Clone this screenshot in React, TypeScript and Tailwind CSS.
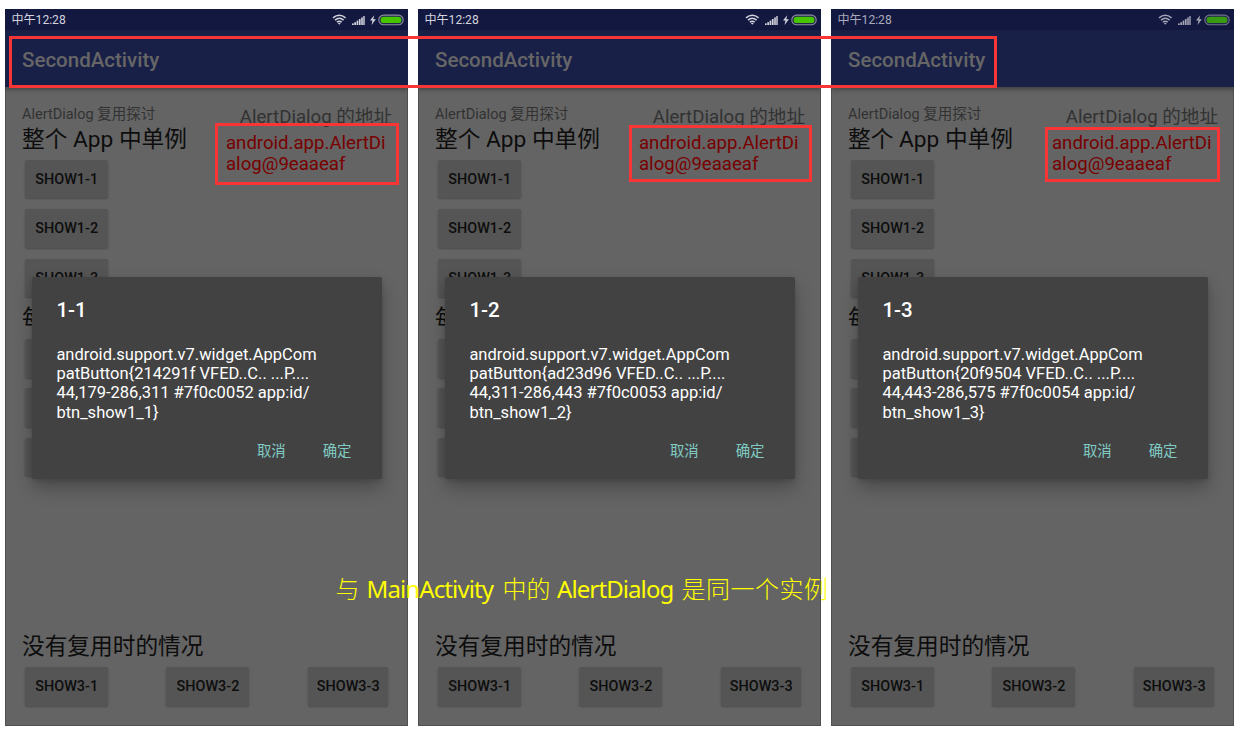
import React from "react";

type Shot = { title: string; lines: string[]; dim?: boolean };

const shots: Shot[] = [
  {
    title: "1-1",
    lines: ["android.support.v7.widget.AppCom", "patButton{214291f VFED..C.. ...P....", "44,179-286,311 #7f0c0052 app:id/", "btn_show1_1}"],
  },
  {
    title: "1-2",
    lines: ["android.support.v7.widget.AppCom", "patButton{ad23d96 VFED..C.. ...P....", "44,311-286,443 #7f0c0053 app:id/", "btn_show1_2}"],
  },
  {
    title: "1-3",
    lines: ["android.support.v7.widget.AppCom", "patButton{20f9504 VFED..C.. ...P....", "44,443-286,575 #7f0c0054 app:id/", "btn_show1_3}"],
    dim: true,
  },
];

function StatusIcons({ dim }: { dim?: boolean }) {
  const ink = dim ? "#a3a4b5" : "#d3d4de";
  return (
    <svg width="74" height="14" viewBox="0 0 74 14" fill="none">
      <g stroke={ink} strokeWidth="1.5">
        <path d="M1 4.9Q7.3-.5 13.6 4.9" />
        <path d="M3 7.1Q7.3 3.3 11.6 7.1" />
        <path d="M4.9 9.2Q7.3 7.2 9.7 9.2" />
      </g>
      <path d="M7.3 11.8 5.8 10.1Q7.3 9.2 8.8 10.1Z" fill={ink} />
      <g fill={ink}>
        <rect x="20" y="10.4" width="1.7" height="1.6" />
        <rect x="22.3" y="9.2" width="1.7" height="2.8" />
        <rect x="24.6" y="7.6" width="1.7" height="4.4" />
        <rect x="26.9" y="6" width="1.7" height="6" />
        <rect x="29.2" y="4.4" width="1.6" height="7.6" />
        <rect x="31.3" y="3" width="1.4" height="9" />
        <path d="M42.2 2.2 38 7.6h2.5l-1 4.4 4.4-5.8h-2.6Z" />
      </g>
      <rect x="46.8" y="2.1" width="24.4" height="9.6" rx="4.8" fill="#20254b" stroke={dim ? "#70728a" : "#8b8d9f"} strokeWidth="1.1" />
      <rect x="48.6" y="3.7" width="20.8" height="6.4" rx="3.2" fill={dim ? "#379a12" : "#46c400"} />
    </svg>
  );
}

function RaisedButton({ label, className = "w-[82.5px]" }: { label?: string; className?: string }) {
  return (
    <div
      className={`flex h-[38.5px] shrink-0 items-center justify-center rounded-[2px] bg-[#555555] pt-[1.5px] pl-px text-[14.4px] font-medium text-[#0d0d0d] shadow-[0_1px_2px_rgba(0,0,0,0.25)] ${className}`}
    >
      {label}
    </div>
  );
}

function Dialog({ title, lines }: Shot) {
  return (
    <div className="absolute top-[268px] left-[27px] flex h-[202px] w-[350px] flex-col rounded-[2px] bg-[#424242] pr-[25px] pl-[24.4px] text-white shadow-[0_9px_18px_rgba(0,0,0,0.26),0_2px_5px_rgba(0,0,0,0.12)]">
      <div className="mt-[21px] h-[24px] text-[20.5px] leading-[24px] font-medium">{title}</div>
      <div className="mt-[22.5px] text-[16.5px] leading-[19.35px] whitespace-nowrap">
        {lines.map((l) => (
          <div key={l}>{l}</div>
        ))}
      </div>
      <div className="mt-[19.5px] flex justify-end gap-[37px] pr-[5.5px] text-[14.4px] leading-[22px] text-[#80cbc4]">
        <span>取消</span>
        <span>确定</span>
      </div>
    </div>
  );
}

function Phone(shot: Shot) {
  return (
    <section className="relative flex h-[717px] w-[403px] shrink-0 flex-col overflow-hidden bg-[#646464]">
      <div className={`flex h-[21px] shrink-0 items-center justify-between bg-[#131840] pl-[6.4px] pr-[2px] text-[12.1px] ${shot.dim ? "text-[#a9aabb]" : "text-[#d3d4de]"}`}>
        <span className="pt-[2px]">中午12:28</span>
        <StatusIcons dim={shot.dim} />
      </div>
      <header className="z-0 flex h-[57px] shrink-0 items-center bg-[#192048] pt-[3px] pl-[17px] text-[20.5px] font-medium text-[#666666] shadow-[0_2px_5px_rgba(0,0,0,0.4)]">
        SecondActivity
      </header>
      <main className="flex flex-1 flex-col border-x border-b border-[#505050] pl-[16px]">
        <div className="flex h-[210px] justify-between">
          <div className="flex flex-col">
            <div className="mt-[18px] h-[19px] text-[14.5px] leading-[20px] text-[#323232]">AlertDialog 复用探讨</div>
            <div className="h-[36.5px] text-[22.7px] leading-[31px] whitespace-nowrap text-[#0d0d0d]">整个 App 中单例</div>
            <div className="ml-[3px] flex flex-col gap-[10.8px]">
              <RaisedButton label="SHOW1-1" />
              <RaisedButton label="SHOW1-2" />
              <RaisedButton label="SHOW1-3" />
            </div>
          </div>
          <div className="mr-[15px] w-[166px] pt-[17px]">
            <div className="text-right text-[18.6px] leading-[26px] whitespace-nowrap text-[#323232]">AlertDialog 的地址</div>
            <div className="mt-[2.5px] text-[18.6px] leading-[21.5px] text-[#780000]">
              <div>android.app.AlertDi</div>
              <div>alog@9eaaeaf</div>
            </div>
          </div>
        </div>
        <div className="mt-[6px] h-[36px] text-[22.7px] leading-[31px] text-[#0d0d0d]">每</div>
        <div className="ml-[3px] flex flex-col gap-[10.8px]">
          <RaisedButton />
          <RaisedButton />
          <RaisedButton />
        </div>
        <div className="mt-auto text-[22.7px] leading-[31px] text-[#0d0d0d]">没有复用时的情况</div>
        <div className="mt-[5.5px] mr-[19px] mb-[19.5px] ml-[3px] flex justify-between">
          <RaisedButton label="SHOW3-1" />
          <RaisedButton label="SHOW3-2" />
          <RaisedButton label="SHOW3-3" className="w-[80.5px]" />
        </div>
      </main>
      <Dialog {...shot} />
    </section>
  );
}

export default function App() {
  return (
    <div
      className="relative h-[732px] w-[1240px] overflow-hidden bg-white pt-[9px] pl-[5px] font-[Roboto,'Noto_Sans_CJK_SC',sans-serif]"
      lang="zh-CN"
    >
      <div className="flex gap-[10px]">
        {shots.map((s) => (
          <Phone key={s.title} {...s} />
        ))}
      </div>
      <div className="absolute top-[36px] left-[9px] h-[52px] w-[988px] border-3 border-[#fa3535]" />
      <div className="absolute top-[123px] left-[215px] h-[62px] w-[184px] border-3 border-[#fa3535]" />
      <div className="absolute top-[125px] left-[629px] h-[57px] w-[183px] border-3 border-[#fa3535]" />
      <div className="absolute top-[127px] left-[1045px] h-[55px] w-[175px] border-3 border-[#fa3535]" />
      <div className="absolute top-[573px] left-[335.5px] flex font-['Noto_Sans','Noto_Sans_CJK_SC',sans-serif] text-[24px] leading-[32px] whitespace-nowrap text-[#ffff00]">
        <span className="w-[31px] font-light">与</span>
        <span className="w-[136px] tracking-[-0.88px]">MainActivity</span>
        <span className="w-[54.5px] font-light">中的</span>
        <span className="w-[124.5px] tracking-[-0.9px]">AlertDialog</span>
        <span className="font-light tracking-[0.5px]">是同一个实例</span>
      </div>
    </div>
  );
}
